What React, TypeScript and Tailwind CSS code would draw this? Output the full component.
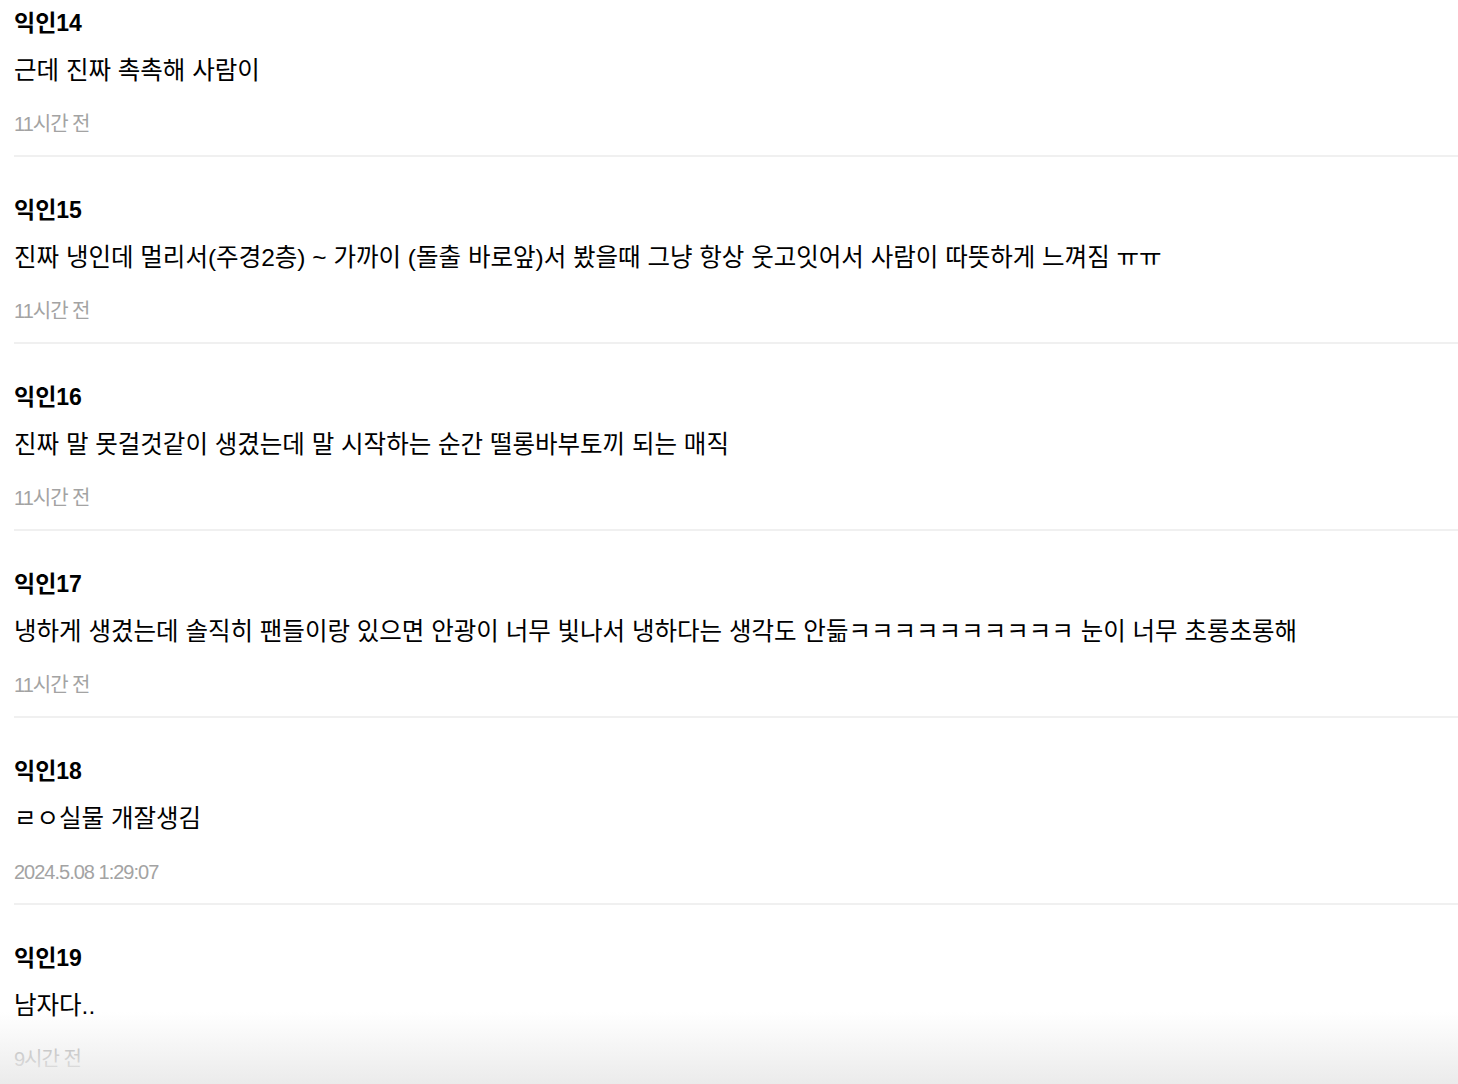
const comments = [
  { name: "익인14", body: "근데 진짜 촉촉해 사람이", time: "11시간 전" },
  {
    name: "익인15",
    body: "진짜 냉인데 멀리서(주경2층) ~ 가까이 (돌출 바로앞)서 봤을때 그냥 항상 웃고잇어서 사람이 따뜻하게 느껴짐 ㅠㅠ",
    time: "11시간 전",
  },
  {
    name: "익인16",
    body: "진짜 말 못걸것같이 생겼는데 말 시작하는 순간 떨롱바부토끼 되는 매직",
    time: "11시간 전",
  },
  {
    name: "익인17",
    body: "냉하게 생겼는데 솔직히 팬들이랑 있으면 안광이 너무 빛나서 냉하다는 생각도 안듦ㅋㅋㅋㅋㅋㅋㅋㅋㅋㅋ 눈이 너무 초롱초롱해",
    time: "11시간 전",
  },
  { name: "익인18", body: "ㄹㅇ실물 개잘생김", time: "2024.5.08 1:29:07" },
  { name: "익인19", body: "남자다..", time: "9시간 전" },
];

export default function App() {
  return (
    <div className="relative h-[1084px] overflow-hidden bg-white pl-[14px] font-['Liberation_Sans','Noto_Sans_CJK_KR',sans-serif] text-black">
      <ul>
        {comments.map((c, i) => (
          <li key={c.name} className={i === 0 ? "pt-[8px]" : "pt-[38px]"}>
            <div className="h-[30px] text-[23px] font-bold leading-[30px]">{c.name}</div>
            <p className="mt-[15px] h-[36px] text-[24.5px] leading-[36px] whitespace-nowrap">{c.body}</p>
            <div className="mt-[20px] h-[30px] text-[20px] leading-[30px] tracking-[-1px] text-[#a3a3a3]">
              {c.time}
            </div>
            <div className="mt-[16px] h-[2px] bg-[#f0f0f0]" />
          </li>
        ))}
      </ul>

      {/* bottom fade */}
      <div className="pointer-events-none absolute inset-x-0 bottom-0 h-[72px] bg-gradient-to-b from-white/0 to-[#ebebeb]" />
    </div>
  );
}
